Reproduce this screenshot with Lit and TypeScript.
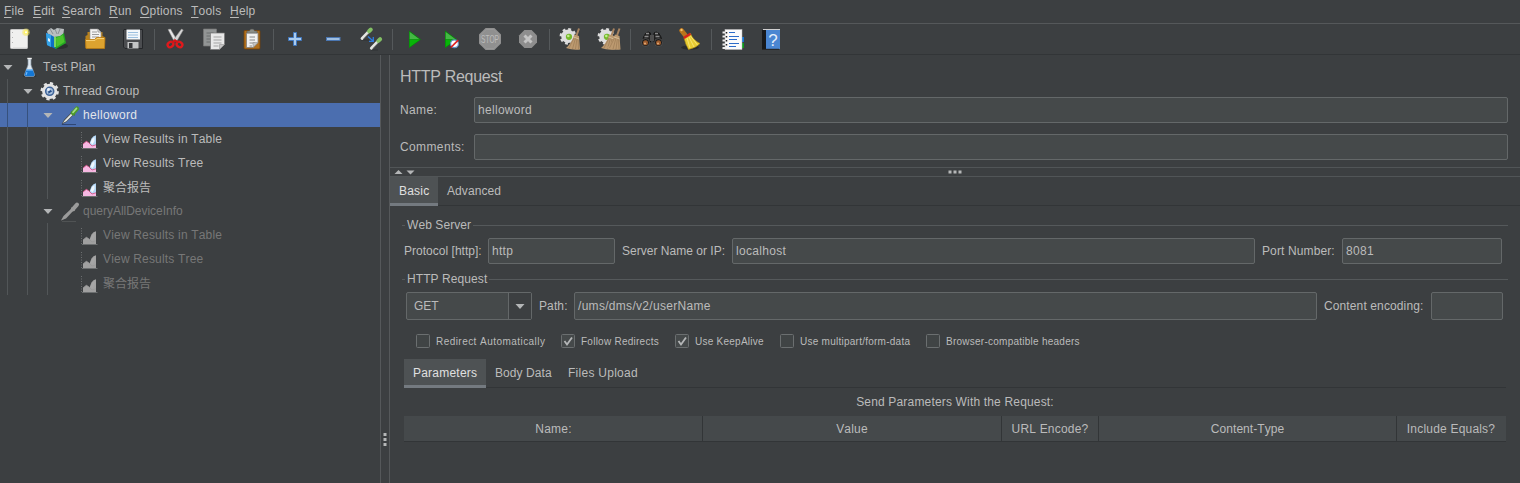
import { LitElement, html, css, svg, nothing } from 'lit';
import { customElement, property, state } from 'lit/decorators.js';
import { classMap } from 'lit/directives/class-map.js';

const wandShape = svg`
  <path d="M1.500 21.500L4 16.800L11.300 9.500L13.700 11.700L6.300 19Z" fill="#4a4d4b"/>
  <path d="M2.800 20L5 16.900L11.300 10.400L12.800 11.700L6.300 18.200Z" fill="#e6e9e4"/>
  <path d="M11 8.700L14.800 12.200" stroke="#3f7a25" stroke-width="1.400"/>
  <path d="M13 10.200L17 5.600" stroke="#4d9a2b" stroke-width="4.200" stroke-linecap="round"/>
  <path d="M13 9.400L16.500 5.400" stroke="#a5dc85" stroke-width="1.600" stroke-linecap="round"/>`;

const smallWand = (dx: number, dy: number) => svg`<g transform=${`translate(${dx} ${dy})`}>
  <path d="M.5 11L6.500 4.800" stroke="#e4e6e2" stroke-width="2.800" stroke-linecap="round"/>
  <path d="M1.800 11.300L7.300 5.600" stroke="#8d918c" stroke-width=".9"/>
  <path d="M7.500 3.700L9.300 2" stroke="#82c064" stroke-width="4" stroke-linecap="round"/></g>`;

const chart = (left: string, right: string, edge: string, glow: string) => svg`
  <path d="M1.500 5v16" fill="none" stroke="#6c6f70" stroke-dasharray="1 1.500"/>
  <path d="M2 21.500h15.500" stroke="#6c6f70"/>
  <path d="M9.500 16.500L11.500 11.500L13.500 9.300L16 8.300V19.500L11.500 19.500Z" fill=${right}/>
  <path d="M10.500 15.500L12 12L14.500 10V14L12.500 17.500Z" fill=${glow}/>
  <path d="M3 21V17L6.300 14.300L8.500 15.500L12 19L16 17.800V21Z" fill=${left}/>
  <path d="M3 17L6.300 14.300L8.500 15.500L12 19L16 17.800" fill="none" stroke=${edge} stroke-width=".8"/>`;

const gearRing = (cx: number, cy: number, r: number, color: string) => svg`
  <circle cx=${cx} cy=${cy} r=${r} fill="none" stroke=${color} stroke-width="3.600"/>
  <circle cx=${cx} cy=${cy} r=${r + 2.2} fill="none" stroke=${color} stroke-width="2.400"
    stroke-dasharray=${`${((r + 2.2) * Math.PI) / 8} ${((r + 2.2) * Math.PI) / 8}`}/>`;

const treeIcons: Record<string, unknown> = {
  flask: svg`
    <ellipse cx="9.500" cy="21" rx="7" ry="1.500" fill="#2e3133"/>
    <path d="M8 4v6L4.500 19.500Q4.300 21.500 6 21.500h7.200q1.600 0 1.300-2L11 10V4Z" fill="#dfe8f0" stroke="#8795a3" stroke-width=".7"/>
    <path d="M7.300 3.500h4.500" stroke="#f2f2f2" stroke-width="1.400"/>
    <path d="M6.200 14.500h6.600l1.600 5q.2 1.800-1.300 1.800H6q-1.600 0-1.300-1.800Z" fill="#1477d4"/>
    <path d="M6 15h7" stroke="#8cc9ff"/><path d="M7 17l-1 3" stroke="#6fb7fa" stroke-width="1.200"/>`,
  gear: svg`
    ${gearRing(9.7, 12.3, 5.8, '#e3e3e3')}
    <circle cx="9.700" cy="12.300" r="4" fill="#a9c0dc" stroke="#42669a" stroke-width="1.600"/>
    <path d="M8.300 9.800l4 2.500-4 2.500Z" fill="#254d88"/><circle cx="8.500" cy="10.500" r="1.500" fill="#e8f1fb"/>`,
  wand: svg`<path d="M2 21.500h14" stroke="#2f4674"/>${wandShape}`,
  wandOff: svg`<path d="M2 22.500h14" stroke="#505354"/>
    <path d="M1 21.500L3.500 17L12 9L14 11L6 19.500Z" fill="#9b9b9b"/>
    <path d="M11.300 8.800L14.500 11.800" stroke="#999" stroke-width="1.200"/>
    <path d="M12.800 10.300L17 5.600" stroke="#9b9b9b" stroke-width="4" stroke-linecap="round"/>`,
  chart: chart('#f6b8e2', '#b3d6f5', '#d4487e', '#eef6fd'),
  chartOff: chart('#a0a0a0', '#a2a2a2', '#989898', '#a6a6a6'),
};

const sheet = (x: number, y: number, w: number, h: number, fill: string, line: string) => svg`
  <path d=${`M${x} ${y}h${w}v${h - 5}l-5 5h-${w - 5}Z`} fill=${fill} stroke="#777" stroke-width=".7"/>
  <path d=${`M${x + 3} ${y + 4}h${w - 6}M${x + 3} ${y + 7}h${w - 6}M${x + 3} ${y + 10}h${w - 6}M${x + 3} ${y + 13}h${w - 9}`} stroke=${line} stroke-width="1"/>
  <path d=${`M${x + w - 5} ${y + h}v-5h5Z`} fill="#c4c4c4" stroke="#888" stroke-width=".5"/>`;

const broomAt = (dx: number) => svg`<g transform=${`translate(${dx} 0)`}>
  <path d="M27 4.500L24 13" stroke="#a88460" stroke-width="2"/>
  <path d="M22.500 10.500l4.500 1.500 1 13.500q-7 1-14-1.500 5-4 8.500-13.500Z" fill="#bd9a70"/>
  <path d="M22 14l-5 10M23.500 14l-3 11M25 14l-1.500 11M26 14l.5 11" stroke="#957550" stroke-width=".6"/>
  <path d="M21.500 13l5.500 2" stroke="#d5bd97"/></g>`;

const bigGear = svg`<circle cx="16" cy="12.300" r="6" fill="#d9d9d9"/>${gearRing(16, 12.3, 5, '#dedede')}
  <circle cx="17" cy="12.800" r="3.100" fill="#76b82c"/><circle cx="16.300" cy="12" r="1.300" fill="#bff08a"/>`;

const octagon = (x: number, y: number, s: number) => {
  const c = s * 0.3;
  return `M${x + c} ${y}h${s - 2 * c}l${c} ${c}v${s - 2 * c}l${-c} ${c}h${-(s - 2 * c)}l${-c} ${-c}v${-(s - 2 * c)}Z`;
};

const play = (x: number) => svg`<g transform=${`translate(${x} 0)`}>
  <path d="M0 6.500L12 15.500 0 24.300Z" fill="#078a09"/><path d="M.7 8L10.500 15.200H.7Z" fill="#45b845"/><path d="M.7 15.800h10L.7 23Z" fill="#08b508"/></g>`;

const toolIcons: Record<string, unknown> = {
  new: svg`<rect x="10.500" y="5.500" width="17" height="19" rx=".8" fill="#f0f0ef" stroke="#c5c5c5"/>
    <path d="M12.500 8v15" stroke="#b5b5b5" stroke-dasharray="1 4"/>
    <path d="M13 24h14" stroke="#d5d5d5"/>
    <circle cx="26" cy="8.300" r="3.800" fill="#f5e76a" opacity=".55"/><circle cx="26" cy="8.300" r="2.300" fill="#fff36c"/><circle cx="26" cy="8.300" r="1" fill="#fff"/>`,
  templates: svg`<ellipse cx="22" cy="22" rx="8" ry="3" fill="#2c2f30"/>
    <path d="M9 7l4-3 3 2 3-2 7 1-1 8-14 2Z" fill="#b9bec0"/>
    <path d="M12 5l3 5M17 5l2 5M22 5l-2 5" stroke="#8b9194"/>
    <path d="M8 9l5 2 5 3v11l-9-4Z" fill="#0d6fc4"/><path d="M8 9l5 2v12l-4-2Z" fill="#34a3e8"/>
    <path d="M10 14l2 1v3l-2-1Z" fill="#d9f0ff"/>
    <path d="M16 13l6-1 4-3 2 10-10 6-2-3Z" fill="#22a722"/><path d="M18 14l7-3 1.500 7-8 5Z" fill="#4cc42c"/>
    <path d="M17 13v10" stroke="#baf38c" stroke-width="1.200"/>`,
  open: svg`<path d="M9.500 12l2-1V8h15v4l2 1v11h-19Z" fill="#b9821c"/>
    <path d="M14 5h8l3 3v11H14Z" fill="#f4f4f4" stroke="#8f8f8f" stroke-width=".6"/><path d="M22 5v3h3" fill="none" stroke="#999"/>
    <path d="M16 8h5M16 10.500h7M16 13h7" stroke="#9b9b9b"/>
    <path d="M9.500 15.500h9l2-2h8.500l-.5 11h-18.500Z" fill="#dda32f" stroke="#b97b13" stroke-width=".8"/><path d="M10 16.500h9l2-2h7" fill="none" stroke="#f6cf73"/>`,
  save: svg`<path d="M10 5.500h18.500v19H11l-1.500-1.500V6Z" fill="#4b4d50" stroke="#25272a"/>
    <rect x="12.500" y="5.500" width="13.500" height="10" fill="#f3f7fa"/><path d="M14 8.500h10M14 11h10M14 13.500h10" stroke="#9cc0df"/>
    <rect x="13.500" y="18" width="11" height="6.500" fill="#c3c5c6"/><rect x="15" y="19" width="3.500" height="5" fill="#35373a"/>`,
  cut: svg`<path d="M11 5.500l2.500-.5 6.500 11-2.500 2Z" fill="#e8e8e8" stroke="#888" stroke-width=".5"/><path d="M24.500 5l1.800 1-7 12-3-2Z" fill="#d6d6d6" stroke="#888" stroke-width=".5"/>
    <ellipse cx="13.500" cy="20.500" rx="3" ry="2.500" transform="rotate(-35 13.500 20.500)" fill="none" stroke="#e0191c" stroke-width="2.300"/>
    <ellipse cx="22.500" cy="20.500" rx="3" ry="2.500" transform="rotate(35 22.500 20.500)" fill="none" stroke="#e0191c" stroke-width="2.300"/>
    <path d="M15 18.500l3-2 3 2" fill="none" stroke="#d01518" stroke-width="2.600"/>`,
  copy: svg`${sheet(8.5, 5, 13, 17, '#929595', '#6b6e6e')}${sheet(15.5, 9, 14, 16.5, '#e8e8e8', '#a3a3a3')}`,
  paste: svg`<rect x="11" y="6.500" width="16" height="18.500" rx="1" fill="#b06f1d" stroke="#754309" stroke-width=".8"/>
    ${sheet(13.5, 9, 11.5, 14.5, '#f1f1f1', '#888')}
    <path d="M14 9V7h2.500q0-2 2.500-2t2.500 2H24v2Z" fill="#8c8e87" stroke="#555" stroke-width=".5"/>`,
  plus: svg`<path d="M17.500 8.500h3v5h5v3h-5v5h-3v-5h-5v-3h5Z" fill="#a9cbef" stroke="#3f76bd"/>`,
  minus: svg`<rect x="12.500" y="13.500" width="13.500" height="3" fill="#9fbfe2" stroke="#4a76b1"/>`,
  toggle: svg`<path d="M9 16h8M19 26h7" stroke="#2f3234"/>${smallWand(9.5, 3.5)}${smallWand(18.8, 13.2)}
    <path d="M16 12.500l4.500 4M21.300 13v4.300h-4.300" fill="none" stroke="#2e7ce0" stroke-width="1.300"/>`,
  start: play(14),
  startNoTimers: svg`${play(12)}
    <circle cx="21.500" cy="19.800" r="3.900" fill="#fff" stroke="#6192c6" stroke-width="1.200"/><path d="M17.800 23.500l7.400-7.400" stroke="#e02020" stroke-width="1.700"/>`,
  stop: svg`<path d=${octagon(8, 4, 22)} fill="#909090"/><path d=${octagon(9.5, 5.5, 19)} fill="none" stroke="#989898"/>
    <g transform="translate(19 19) scale(.6 1)"><text x="0" y="0" text-anchor="middle" font-family="Liberation Sans,sans-serif" font-size="11" letter-spacing="0" fill="#bdbdbd">STOP</text></g>`,
  shutdown: svg`<path d=${octagon(10, 6, 18)} fill="#8e8e8e"/><path d="M15.500 11.500l7 7M22.500 11.500l-7 7" stroke="#c4c4c4" stroke-width="3"/>`,
  clear: svg`${bigGear}${broomAt(0)}`,
  clearAll: svg`${bigGear}${broomAt(-3)}${broomAt(2.5)}`,
  find: svg`<path d="M13 9q2-2 4.500 0v9h-8Q10 12 13 9ZM21 9q2-2 4.500 0 3 3 3.500 9h-8Z" fill="#242424" stroke="#161616"/>
    <rect x="17" y="11" width="4" height="6" fill="#4f4f4f"/><path d="M13 9.500h3M22 9.500h3M11.500 12.500h4M22.500 12.500h4" stroke="#8a8a8a" stroke-width="1.300"/>
    <circle cx="12.500" cy="18.500" r="4" fill="#1c1c1c" stroke="#666" stroke-width=".6"/><circle cx="25.500" cy="18.500" r="4" fill="#1c1c1c" stroke="#666" stroke-width=".6"/>
    <circle cx="12.500" cy="18.800" r="2.500" fill="#9b5a2c"/><circle cx="25.500" cy="18.800" r="2.500" fill="#9b5a2c"/><circle cx="12" cy="19.500" r="1" fill="#e4ad7a"/><circle cx="25" cy="19.500" r="1" fill="#e4ad7a"/>`,
  broom: svg`<ellipse cx="19" cy="23.500" rx="9" ry="2" fill="#292c2d"/>
    <path d="M10.500 6.500L14.500 11.500" stroke="#b9741c" stroke-width="4.600" stroke-linecap="round"/><circle cx="10.500" cy="6" r="1.200" fill="#f7c36a"/>
    <path d="M13 14l6.500-4.500Q22 16 29 19.500q-4 4.500-11.500 6-3-5-4.500-11.500Z" fill="#e8cc32" stroke="#ae8d13" stroke-width=".6"/>
    <path d="M16 14l3 10M18 13l5 10M19.500 12l7 9" stroke="#f7e877" stroke-width=".9"/>
    <path d="M12.800 14l6.700-4.300" stroke="#d6221c" stroke-width="2.500"/>`,
  log: svg`<rect x="26" y="13" width="4" height="5" fill="#1374d4"/><rect x="26" y="19" width="4" height="5" fill="#0a9b1b"/>
    <rect x="11" y="5.500" width="17" height="20" fill="#fbfbfb" stroke="#bbb" stroke-width=".5"/>
    <path d="M15 8.500h6M15 12.500h10M15 15.500h8M15 19.500h10M15 22.500h7" stroke="#2d6cc8"/>
    <path d="M8.500 8.500h4M8.500 12.500h4M8.500 16.500h4M8.500 20.500h4M8.500 24h4" stroke="#eee" stroke-width="1.800"/><path d="M12.500 8v1.500M12.500 12v1.500M12.500 16v1.500M12.500 20v1.500" stroke="#222" stroke-width="1.500"/>`,
  help: svg`<path d="M10 6h4v19h-4Z" fill="#18191b"/><path d="M11 5.500h17" stroke="#d0d0d0"/>
    <rect x="14" y="6" width="14" height="19" fill="#4a86d2"/><path d="M10 25.300h17" stroke="#222"/>
    <text x="21" y="22" text-anchor="middle" font-family="Liberation Sans,sans-serif" font-size="17" letter-spacing="0" fill="#e4eefb">?</text>`,
};

interface TreeRow { label: string; depth: number; icon: string; branch?: boolean; off?: boolean; fit?: string; }

const treeRows: TreeRow[] = [
  { label: 'Test Plan', depth: 0, icon: 'flask', branch: true },
  { label: 'Thread Group', depth: 1, icon: 'gear', branch: true, fit: 'snug' },
  { label: 'helloword', depth: 2, icon: 'wand', branch: true, fit: 'loose' },
  { label: 'View Results in Table', depth: 3, icon: 'chart' },
  { label: 'View Results Tree', depth: 3, icon: 'chart' },
  { label: '聚合报告', depth: 3, icon: 'chart', fit: 'cjk' },
  { label: 'queryAllDeviceInfo', depth: 2, icon: 'wandOff', branch: true, off: true, fit: 'tight' },
  { label: 'View Results in Table', depth: 3, icon: 'chartOff', off: true },
  { label: 'View Results Tree', depth: 3, icon: 'chartOff', off: true },
  { label: '聚合报告', depth: 3, icon: 'chartOff', off: true, fit: 'cjk' },
];

@customElement('plan-tree')
class PlanTree extends LitElement {
  @state() private selected = 2;
  static styles = css`
    :host { display: block; }
    .row { display: flex; height: 24px; line-height: 24px; color: #bbb; white-space: pre; }
    .row.selected { background: #4b6eaf; color: #e2e5ea; }
    .row.off { color: #777; }
    .cell { width: 20px; flex: none; box-sizing: border-box; display: block; }
    .guide { border-left: 1px solid #525658; margin-left: 7px; width: 13px; }
    .selected .guide { border-color: #36517d; }
    .icon { margin-right: 3px; }
    .label { letter-spacing: .18px; }
    .snug { letter-spacing: .13px; }
    .tight { letter-spacing: -.02px; }
    .loose { letter-spacing: .32px; }
    .cjk { letter-spacing: 0; line-height: 26px; }
  `;
  render() {
    return treeRows.map((r, i) => html`
      <div class=${classMap({ row: true, selected: i === this.selected, off: !!r.off })} @click=${() => (this.selected = i)}>
        ${Array.from({ length: r.depth }, () => html`<span class="cell guide"></span>`)}
        ${r.branch
          ? html`<svg class="cell" width="20" height="24"><path d="M3.500 10h9L8 15Z" fill="#b4b6b7"/></svg>`
          : html`<span class="cell"></span>`}
        <svg class="cell icon" width="20" height="24">${treeIcons[r.icon]}</svg><span class="label ${r.fit ?? ''}">${r.label}</span>
      </div>`);
  }
}

@customElement('tool-bar')
class ToolBar extends LitElement {
  static styles = css`
    :host { display: flex; height: 30px; border-bottom: 1px solid #323537; }
    svg { display: block; flex: none; }
    .sep { width: 1px; height: 21px; margin: 5px 2px 0; background: #55595b; }
  `;
  private groups = [
    ['new', 'templates', 'open', 'save'], ['cut', 'copy', 'paste'], ['plus', 'minus', 'toggle'],
    ['start', 'startNoTimers', 'stop', 'shutdown'], ['clear', 'clearAll'], ['find', 'broom'], ['log', 'help'],
  ];
  render() {
    return this.groups.map((g, i) => html`${i ? html`<span class="sep"></span>` : nothing}${g.map(
      (n) => html`<svg width="38" height="30">${toolIcons[n]}</svg>`)}`);
  }
}

@customElement('tab-strip')
class TabStrip extends LitElement {
  @property({ type: Array }) tabs: [string, number][] = [];
  @state() private active = 0;
  static styles = css`
    :host { display: flex; height: 29px; box-shadow: inset 0 -1px #323537; letter-spacing: .08px; }
    .tab { padding-left: 9px; line-height: 29px; color: #bbb; box-sizing: border-box; height: 29px; white-space: pre; }
    .tab:nth-child(3) { letter-spacing: .27px; }
    .tab.active { background: #4e5254; color: #e0e0e0; border-bottom: 3px solid #747a80; letter-spacing: .22px; }
  `;
  render() {
    return this.tabs.map(([t, w], i) => html`<div style="width:${w}px" class=${classMap({ tab: true, active: i === this.active })}
      @click=${() => (this.active = i)}>${t}</div>`);
  }
}

@customElement('app-root')
class AppRoot extends LitElement {
  static styles = css`
    :host { display: flex; flex-direction: column; height: 483px; background: #3c3f41; color: #bbb; overflow: hidden;
      font: 12px "Liberation Sans", "Noto Sans CJK SC", Arial, sans-serif; font-kerning: none; letter-spacing: .2px; }
    .menu { display: flex; height: 23px; line-height: 22px; border-bottom: 1px solid #55585a; padding-left: 4px; flex: none; }
    .menu span { flex: none; white-space: pre; }
    .menu u { text-underline-offset: 2px; }
    .body { display: flex; flex: 1; min-height: 0; }
    .tree { width: 380px; flex: none; }
    .split { width: 8px; flex: none; border: solid #55585a; border-width: 0 1px; display: flex; align-items: flex-end; }
    .split svg { display: block; margin-bottom: 36px; width: 8px; height: 14px; }
    .main { flex: 1; min-width: 0; display: flex; flex-direction: column; }
    .title { font-size: 16px; letter-spacing: -.3px; line-height: 20px; margin: 12px 0 10px 10px; }
    .line { display: flex; align-items: center; white-space: pre; }
    .line > span { flex: none; box-sizing: border-box; }
    .head { height: 26px; margin: 0 12px 11px 10px; letter-spacing: .38px; }
    .head > span { width: 74px; }
    .field { box-sizing: border-box; height: 26px; line-height: 24px; border: 1px solid #646869; border-radius: 2px; background: #45494a; padding: 0 3px; flex: 1; letter-spacing: .3px; }
    .collapse { height: 8px; border: solid #515557; border-width: 1px 0; margin-top: -4px; display: flex; justify-content: space-between; }
    .collapse svg { display: block; }
    .collapse .dots { margin-right: 558px; }
    .form { padding: 11px 12px 0; }
    .legend { display: flex; align-items: center; height: 16px; gap: 2px; white-space: pre; letter-spacing: .08px; }
    .legend::before, .legend::after { content: ""; height: 1px; background: #55595b; width: 3px; }
    .legend::after { flex: 1; }
    .server { margin: 5px 6px 7px 2px; height: 26px; letter-spacing: .02px; }
    .request { margin: 5px 5px 0 4px; height: 28px; letter-spacing: .12px; }
    .request .field { height: 28px; line-height: 26px; }
    .protocol { width: 84px; } .host { width: 117px; padding-left: 7px; } .port { width: 87px; padding-left: 7px; letter-spacing: .12px; }
    .path { width: 42px; padding-left: 7px; } .encoding { width: 114px; padding-left: 7px; }
    .w127 { flex: 0 0 127px; } .w160 { flex: 0 0 160px; } .w72 { flex: 0 0 72px; }
    .request .combo { flex: 0 0 126px; padding: 0 0 0 7px; display: flex; justify-content: space-between; letter-spacing: -.05px; }
    .combo svg { display: block; background: #3c3f41; border-left: 1px solid #646869; }
    .checks { display: flex; height: 14px; margin: 14px 0 11px 14px; font-size: 10px; letter-spacing: .25px; }
    .check { display: flex; align-items: center; gap: 6px; white-space: pre; flex: none; }
    .check:first-child { letter-spacing: .45px; }
    .check svg { display: block; }
    .send { text-align: center; height: 28px; line-height: 28px; letter-spacing: .17px; }
    .params { margin: 0 2px; }
    .table { display: grid; grid-template-columns: 299px 299px 97px 298px 1fr; height: 25px; line-height: 26px; text-align: center; background: #45494b; border-bottom: 1px solid #323537; }
    .table span + span { box-shadow: inset 1px 0 #323537; }
    .table span:not(:first-child) { margin-left: -1px; }
    .table span:nth-child(4) { letter-spacing: .05px; }
  `;
  private menus: [string, number][] = [['File', 29], ['Edit', 29], ['Search', 47], ['Run', 31], ['Options', 51], ['Tools', 39], ['Help', 40]];
  private checks: [string, boolean, number][] = [
    ['Redirect Automatically', false, 145], ['Follow Redirects', true, 114], ['Use KeepAlive', true, 105],
    ['Use multipart/form-data', false, 146], ['Browser-compatible headers', false, 160],
  ];
  render() {
    return html`
      <div class="menu">${this.menus.map(([m, w]) => html`<span style="width:${w}px"><u>${m[0]}</u>${m.slice(1)}</span>`)}</div>
      <tool-bar></tool-bar>
      <div class="body">
        <plan-tree class="tree"></plan-tree>
        <div class="split"><svg><path d="M2.500 0h3v3h-3zM2.500 5h3v3h-3zM2.500 10h3v3h-3z" fill="#b5b7b8"/></svg></div>
        <div class="main">
          <div class="title">HTTP Request</div>
          <div class="line head"><span>Name:</span><div class="field">helloword</div></div>
          <div class="line head"><span>Comments:</span><div class="field"></div></div>
          <div class="collapse">
            <svg width="26" height="8"><path d="M4.500 6h8L8.500 2zM16.500 2.500h8l-4 4z" fill="#b4b6b7"/></svg>
            <svg class="dots" width="14" height="8"><path d="M.5 2.500h3v3h-3zM5.500 2.500h3v3h-3zM10.500 2.500h3v3h-3z" fill="#b5b7b8"/></svg>
          </div>
          <tab-strip .tabs=${[['Basic', 48], ['Advanced', 72]]}></tab-strip>
          <div class="form">
            <div class="legend">Web Server</div>
            <div class="line server">
              <span class="protocol">Protocol [http]:</span><div class="field w127">http</div>
              <span class="host">Server Name or IP:</span><div class="field">localhost</div>
              <span class="port">Port Number:</span><div class="field w160">8081</div>
            </div>
            <div class="legend">HTTP Request</div>
            <div class="line request">
              <div class="field combo">GET<svg width="22" height="26"><path d="M6.500 11h9L11 16Z" fill="#b4b6b7"/></svg></div>
              <span class="path">Path:</span><div class="field">/ums/dms/v2/userName</div>
              <span class="encoding">Content encoding:</span><div class="field w72"></div>
            </div>
            <div class="checks">${this.checks.map(([t, on, w]) => html`
              <div class="check" style="width:${w}px"><svg width="14" height="14"><rect x=".5" y=".5" width="13" height="13" rx="1" fill=${on ? '#45494a' : '#404445'} stroke="#6b6f70"/>${
                on ? svg`<path d="M3.500 7l2.500 3.500 5-7" fill="none" stroke="#b4b6b7" stroke-width="1.800"/>` : nothing}</svg>${t}</div>`)}
            </div>
            <div class="params">
              <tab-strip .tabs=${[['Parameters', 82], ['Body Data', 73], ['Files Upload', 88]]}></tab-strip>
              <div class="send">Send Parameters With the Request:</div>
              <div class="table">${['Name:', 'Value', 'URL Encode?', 'Content-Type', 'Include Equals?'].map((h) => html`<span>${h}</span>`)}</div>
            </div>
          </div>
        </div>
      </div>`;
  }
}
